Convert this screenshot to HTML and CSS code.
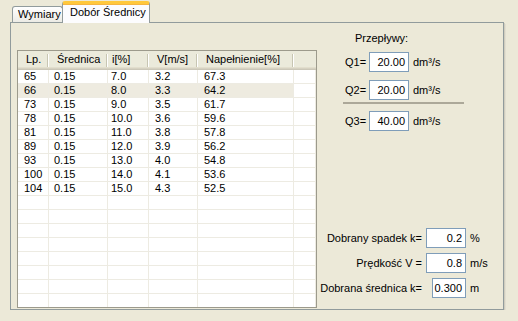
FILE: index.html
```html
<!DOCTYPE html>
<html lang="pl">
<head>
    <meta charset="UTF-8">
    <title>Dobór Średnicy</title>
    <link rel="stylesheet" href="styles.css">
</head>
<body>
    <div class="tabs">
        <div class="tab-strip">
            <div class="tab">Wymiary</div>
            <div class="tab active">Dobór Średnicy</div>
        </div>
        <div class="tab-page">
            <div class="listview">
                <table class="grid">
                    <colgroup>
                        <col class="c-lp">
                        <col class="c-sr">
                        <col class="c-i">
                        <col class="c-v">
                        <col class="c-n">
                        <col>
                    </colgroup>
                    <thead>
                        <tr>
                            <th>Lp.</th>
                            <th>Średnica</th>
                            <th class="narrow">i[%]</th>
                            <th>V[m/s]</th>
                            <th>Napełnienie[%]</th>
                            <th class="filler"></th>
                        </tr>
                    </thead>
                    <tbody>
                        <tr><td>65</td><td class="tight">0.15</td><td class="narrow">7.0</td><td>3.2</td><td>67.3</td><td></td></tr>
                        <tr class="picked"><td>66</td><td class="tight">0.15</td><td class="narrow">8.0</td><td>3.3</td><td>64.2</td><td></td></tr>
                        <tr><td>73</td><td class="tight">0.15</td><td class="narrow">9.0</td><td>3.5</td><td>61.7</td><td></td></tr>
                        <tr><td>78</td><td class="tight">0.15</td><td class="narrow">10.0</td><td>3.6</td><td>59.6</td><td></td></tr>
                        <tr><td>81</td><td class="tight">0.15</td><td class="narrow">11.0</td><td>3.8</td><td>57.8</td><td></td></tr>
                        <tr><td>89</td><td class="tight">0.15</td><td class="narrow">12.0</td><td>3.9</td><td>56.2</td><td></td></tr>
                        <tr><td>93</td><td class="tight">0.15</td><td class="narrow">13.0</td><td>4.0</td><td>54.8</td><td></td></tr>
                        <tr><td>100</td><td class="tight">0.15</td><td class="narrow">14.0</td><td>4.1</td><td>53.6</td><td></td></tr>
                        <tr><td>104</td><td class="tight">0.15</td><td class="narrow">15.0</td><td>4.3</td><td>52.5</td><td></td></tr>
                        <tr><td></td><td></td><td></td><td></td><td></td><td></td></tr>
                        <tr><td></td><td></td><td></td><td></td><td></td><td></td></tr>
                        <tr><td></td><td></td><td></td><td></td><td></td><td></td></tr>
                        <tr><td></td><td></td><td></td><td></td><td></td><td></td></tr>
                        <tr><td></td><td></td><td></td><td></td><td></td><td></td></tr>
                        <tr><td></td><td></td><td></td><td></td><td></td><td></td></tr>
                        <tr><td></td><td></td><td></td><td></td><td></td><td></td></tr>
                        <tr><td></td><td></td><td></td><td></td><td></td><td></td></tr>
                    </tbody>
                </table>
            </div>

            <div class="side">
                <div class="flows">
                    <div class="flows-title">Przepływy:</div>
                    <div class="q-row">
                        <span class="q-label">Q1=</span>
                        <span class="field">20.00</span>
                        <span class="unit">dm³/s</span>
                    </div>
                    <div class="q-row second">
                        <span class="q-label">Q2=</span>
                        <span class="field">20.00</span>
                        <span class="unit">dm³/s</span>
                    </div>
                    <div class="sep"></div>
                    <div class="q-row total">
                        <span class="q-label">Q3=</span>
                        <span class="field">40.00</span>
                        <span class="unit">dm³/s</span>
                    </div>
                </div>

                <div class="params">
                    <span class="p-label">Dobrany spadek k=</span>
                    <span class="field">0.2</span>
                    <span class="unit">%</span>

                    <span class="p-label">Prędkość V =</span>
                    <span class="field">0.8</span>
                    <span class="unit">m/s</span>

                    <span class="p-label">Dobrana średnica k=</span>
                    <span class="field short">0.300</span>
                    <span class="unit">m</span>
                </div>
            </div>
        </div>
    </div>
</body>
</html>
```

FILE: styles.css
```css
body {
    margin: 0;
    background-color: #ECE9D8;
    font-family: "Liberation Sans", Arial, sans-serif;
    font-size: 11px;
    color: #000000;
}

.tabs {
    padding: 1px 14px 0 10px;
}

/* tab headers */
.tab-strip {
    display: flex;
    align-items: flex-end;
    height: 21px;
    padding-left: 2px;
    position: relative;
    z-index: 1;
}

.tab {
    box-sizing: border-box;
    width: 51px;
    height: 16px;
    padding-left: 5px;
    line-height: 15px;
    border: 1px solid #919B9C;
    border-bottom: none;
    border-radius: 3px 3px 0 0;
    background: linear-gradient(#FFFFFF, #ECEBE5);
    white-space: nowrap;
}

.tab.active {
    width: 88px;
    height: 22px;
    margin-left: -1px;
    margin-bottom: -1px;
    padding-left: 7px;
    line-height: 17px;
    border-top: 3px solid #FFC83C;
    box-shadow: inset 0 1px 0 #F5B542;
    background: #FCFCFE;
}

/* tab page */
.tab-page {
    box-sizing: border-box;
    height: 288px;
    display: flex;
    border: 1px solid #919B9C;
    background-color: #ECE9D8;
    box-shadow: 1px 1px 0 #D0CDBE, 2px 2px 0 #E2DFD1;
}

/* list view */
.listview {
    box-sizing: border-box;
    width: 300px;
    height: 258px;
    margin: 27px 0 0 6px;
    border: 1px solid #9C9A8C;
    background-color: #FFFFFF;
    overflow: hidden;
    flex-shrink: 0;
}

.grid {
    width: 298px;
    table-layout: fixed;
    border-collapse: separate;
    border-spacing: 0;
}

.c-lp { width: 31px; }
.c-sr { width: 59px; }
.c-i { width: 41px; }
.c-v { width: 49px; }
.c-n { width: 96px; }

.grid th {
    height: 16px;
    padding: 0 0 3px 8px;
    text-align: left;
    font-weight: normal;
    white-space: nowrap;
    background-color: #EBEADB;
    background-image: linear-gradient(#C7C5B2, #C7C5B2), linear-gradient(#FFFFFF, #FFFFFF);
    background-size: 1px 14px, 1px 14px;
    background-position: right 1px top 3px, right 0 top 3px;
    background-repeat: no-repeat;
    box-shadow: inset 0 -1px 0 #CBC7B8, inset 0 -2px 0 #D6D2C2, inset 0 -3px 0 #E2DECD;
}

.grid th.filler {
    background-image: none;
}

.grid th.narrow {
    padding-left: 4px;
}

.grid td {
    height: 13px;
    padding: 0 0 0 6px;
    line-height: 13px;
    white-space: nowrap;
    border-right: 1px solid #EDEBE2;
    border-bottom: 1px solid #EDEBE2;
}

.grid td.tight {
    padding-left: 5px;
}

.grid td.narrow {
    padding-left: 3px;
}

.grid tr.picked td {
    background-color: #EEEBE0;
}

.grid tr.picked td:last-child {
    background-color: #FFFFFF;
}

/* right side */
.side {
    flex: 1;
    display: flex;
    flex-direction: column;
}

.flows {
    margin-top: 9px;
    padding-left: 26px;
}

.flows-title {
    padding-left: 12px;
    line-height: 13px;
}

.q-row {
    display: flex;
    align-items: center;
    height: 20px;
    margin-top: 7px;
}

.q-row.second {
    margin-top: 8px;
}

.q-row.total {
    margin-top: 7px;
}

.q-label {
    box-sizing: border-box;
    width: 26px;
    padding-left: 2px;
}

.field {
    box-sizing: border-box;
    width: 40px;
    height: 20px;
    padding-right: 3px;
    line-height: 18px;
    text-align: right;
    border: 1px solid #7F9DB9;
    background-color: #FFFFFF;
}

.unit {
    margin-left: 4px;
}

.sep {
    width: 121px;
    height: 2px;
    margin-top: 2px;
    background-color: #ACA899;
}

.params {
    margin-top: auto;
    margin-bottom: 11px;
    display: grid;
    grid-template-columns: 1fr 40px 33px;
    column-gap: 4px;
    row-gap: 5px;
    align-items: center;
}

.params .unit {
    margin-left: 0;
}

.p-label {
    line-height: 20px;
    text-align: right;
    white-space: nowrap;
}

.field.short {
    width: 34px;
    justify-self: end;
}
```
